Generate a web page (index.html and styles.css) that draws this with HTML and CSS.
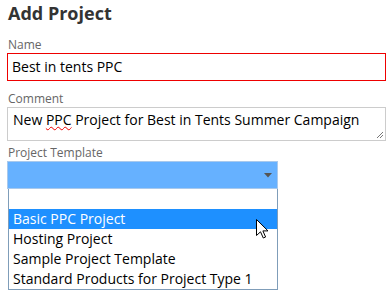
FILE: index.html
```html
<!DOCTYPE html>
<html lang="en">
<head>
  <meta charset="UTF-8">
  <meta name="viewport" content="width=device-width, initial-scale=1.0">
  <title>Add Project</title>
  <link rel="stylesheet" href="styles.css">
</head>
<body>

  <h1>Add Project</h1>

  <div class="field">
    <label>Name</label>
    <div class="input invalid">Best in tents PPC</div>
  </div>

  <div class="field comment">
    <label>Comment</label>
    <div class="input textarea">New <span class="typo">PPC</span> Project for Best in Tents Summer Campaign
      <svg class="grip" width="8" height="8" viewBox="0 0 8 8">
        <path d="M7 1 L1 7 M7 4 L4 7" stroke="#777" stroke-width="1"/>
      </svg>
    </div>
  </div>

  <div class="field template">
    <label>Project Template</label>
    <div class="select-wrap">
      <div class="select">
        <svg class="arrow" width="8" height="5" viewBox="0 0 8 5">
          <path d="M0 0 H8 L4 4.5 Z" fill="#555"/>
        </svg>
      </div>
      <ul class="options">
        <li>&nbsp;</li>
        <li class="active">Basic PPC Project</li>
        <li>Hosting Project</li>
        <li>Sample Project Template</li>
        <li>Standard Products for Project Type 1</li>
      </ul>
      <svg class="cursor" width="13" height="20" viewBox="0 0 13 20">
        <path d="M0.5 0.5 V16.5 L4.5 12.8 L7.3 19 L9.6 18 L6.9 11.9 H12 Z" fill="#fff" stroke="#000" stroke-width="1" stroke-linejoin="miter"/>
      </svg>
    </div>
  </div>

</body>
</html>
```

FILE: styles.css
```css
body {
  margin: 0;
  padding: 0 4px 0 7px;
  font-family: 'Open Sans', 'Noto Sans', sans-serif;
  color: #222;
  background: #fff;
}

h1 {
  font-size: 18px;
  font-weight: bold;
  color: #333;
  margin: 0;
  padding: 0 0 0 1px;
  line-height: 26px;
}

.field {
  margin-top: 10px;
}

.field.comment {
  margin-top: 9px;
}

.field.template {
  margin-top: 3px;
}

.field label {
  display: block;
  font-size: 12px;
  line-height: 17px;
  color: #666;
  padding-left: 1px;
}

.input {
  box-sizing: border-box;
  width: 379px;
  height: 28px;
  border: 1px solid #ccc;
  padding: 0 4px;
  font-size: 14px;
  line-height: 26px;
  color: #000;
}

.input.invalid {
  border-color: #e00;
}

.textarea {
  position: relative;
  height: 34px;
  line-height: 24px;
  padding-left: 5px;
}

.typo {
  text-decoration: underline wavy #e00;
  text-decoration-thickness: 1px;
}

.grip {
  position: absolute;
  right: 1px;
  bottom: 1px;
}

.select-wrap {
  position: relative;
  width: 271px;
}

.select {
  box-sizing: border-box;
  height: 28px;
  background: #66b1ff;
  border: 1px solid #a9c9ec;
  display: flex;
  justify-content: flex-end;
  align-items: center;
  padding-right: 5px;
}

.options {
  list-style: none;
  margin: 0 0 0 1px;
  padding: 0;
  border: 1px solid #7f9db9;
  border-top: none;
  width: 268px;
}

.options li {
  font-size: 14px;
  line-height: 20px;
  height: 20px;
  padding-left: 4px;
  color: #000;
  white-space: nowrap;
}

.options li.active {
  background: #1e90ff;
  color: #fff;
}

.cursor {
  position: absolute;
  left: 249px;
  top: 58px;
}
```
